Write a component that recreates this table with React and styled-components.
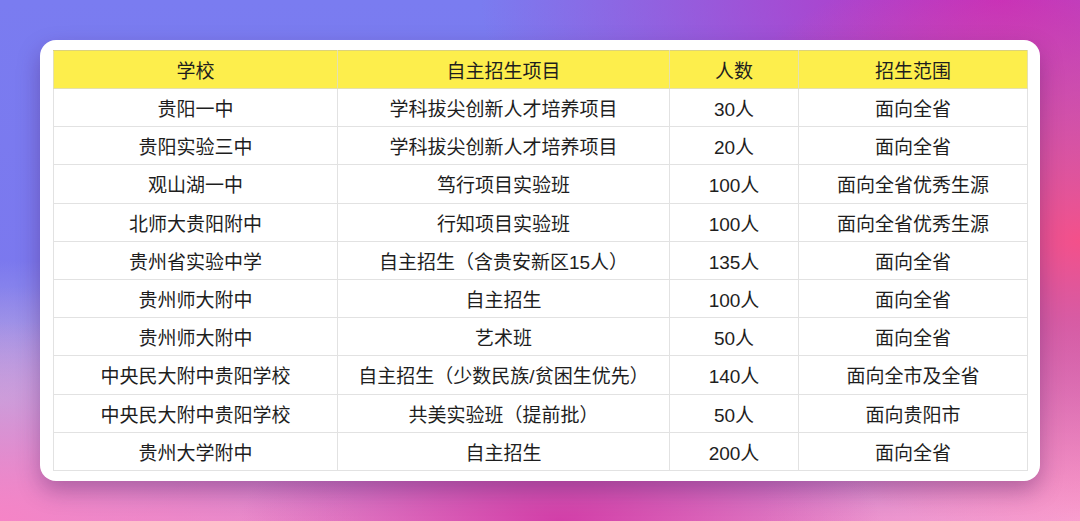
import React from "react"
import styled, { createGlobalStyle } from "styled-components"

const GlobalStyle = createGlobalStyle`
    html, body {
        margin: 0;
        padding: 0;
    }
    body {
        font-family: "Liberation Sans", "Noto Sans CJK SC", sans-serif;
    }
`

const rows = [
    ["贵阳一中", "学科拔尖创新人才培养项目", "30人", "面向全省"],
    ["贵阳实验三中", "学科拔尖创新人才培养项目", "20人", "面向全省"],
    ["观山湖一中", "笃行项目实验班", "100人", "面向全省优秀生源"],
    ["北师大贵阳附中", "行知项目实验班", "100人", "面向全省优秀生源"],
    ["贵州省实验中学", "自主招生（含贵安新区15人）", "135人", "面向全省"],
    ["贵州师大附中", "自主招生", "100人", "面向全省"],
    ["贵州师大附中", "艺术班", "50人", "面向全省"],
    ["中央民大附中贵阳学校", "自主招生（少数民族/贫困生优先）", "140人", "面向全市及全省"],
    ["中央民大附中贵阳学校", "共美实验班（提前批）", "50人", "面向贵阳市"],
    ["贵州大学附中", "自主招生", "200人", "面向全省"],
]

const headers = ["学校", "自主招生项目", "人数", "招生范围"]
const colWidths = [284, 332, 129, 229]

const Page = styled.div`
    width: 1080px;
    height: 521px;
    box-sizing: border-box;
    padding: 40px;
    overflow: hidden;
    background:
        radial-gradient(ellipse 420px 300px at 1080px 240px, #f4508a 0%, rgba(244,80,138,0) 100%),
        radial-gradient(ellipse 520px 260px at 1000px 0px, #c02cc0 0%, rgba(192,44,192,0) 100%),
        radial-gradient(ellipse 320px 120px at 560px 521px, #d23ea8 0%, rgba(210,62,168,0) 100%),
        radial-gradient(ellipse 320px 200px at 1080px 521px, #f8a2d2 0%, rgba(248,162,210,0) 100%),
        radial-gradient(ellipse 360px 200px at 0px 521px, #f584c6 0%, rgba(245,132,198,0) 100%),
        radial-gradient(ellipse 260px 140px at 0px 400px, #b4ace6 0%, rgba(180,172,230,0) 100%),
        linear-gradient(180deg, #7a7cf0 0%, #7b78ee 55%, #e58ccb 100%);
`

const Card = styled.div`
    width: 1000px;
    height: 441px;
    box-sizing: border-box;
    padding: 10px 13px 11px;
    background: #ffffff;
    border-radius: 16px;
    box-shadow: 0 10px 22px rgba(70, 20, 90, 0.35);
`

const Table = styled.table`
    width: 974px;
    border-collapse: collapse;
    table-layout: fixed;
    font-family: "Liberation Sans", "Noto Sans CJK SC", sans-serif;
    font-size: 19px;
    color: #1e1e1e;
`

const HeadCell = styled.th`
    height: 37px;
    padding: 0;
    font-weight: 400;
    text-align: center;
    background: #fdee4c;
    border: 1px solid #e4e0b0;
    border-top-color: #dcd27a;
`

const Cell = styled.td`
    height: 37.2px;
    padding: 0;
    text-align: center;
    border: 1px solid #e2e2e2;
`

export default function App() {
    return (
        <>
            <GlobalStyle />
            <Page>
                <Card>
                    <Table>
                        <colgroup>
                            {colWidths.map((w, i) => <col key={i} style={{ width: w }} />)}
                        </colgroup>
                        <thead>
                            <tr>
                                {headers.map(h => <HeadCell key={h}>{h}</HeadCell>)}
                            </tr>
                        </thead>
                        <tbody>
                            {rows.map((r, i) => (
                                <tr key={i}>
                                    {r.map((c, j) => <Cell key={j}>{c}</Cell>)}
                                </tr>
                            ))}
                        </tbody>
                    </Table>
                </Card>
            </Page>
        </>
    )
}
